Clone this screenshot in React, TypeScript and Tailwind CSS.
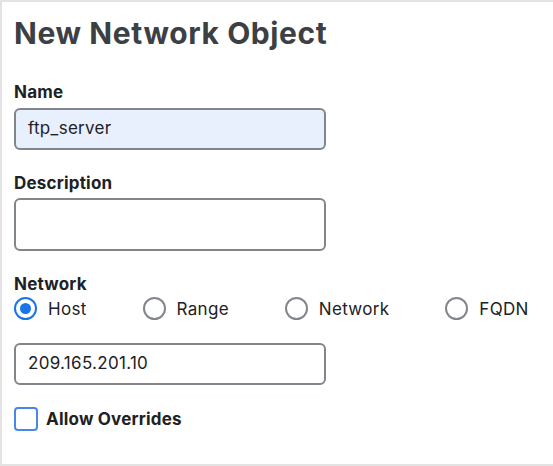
import React from "react";

function Radio({ label, checked }: { label: string; checked?: boolean }) {
  return (
    <div className="flex items-center gap-[11px]">
      <span
        className={
          "flex h-[23px] w-[23px] items-center justify-center rounded-full border-2 " +
          (checked ? "border-[#1a73e8]" : "border-[#80868b]")
        }
      >
        {checked && <span className="h-[11px] w-[11px] rounded-full bg-[#1a73e8]" />}
      </span>
      <span className="text-[17px] leading-[20px] tracking-[0.3px] text-[#202124]">{label}</span>
    </div>
  );
}

export default function App() {
  return (
    <div
      className="h-[466px] w-[553px] border-b-2 border-l-2 border-t-2 border-[#e3e3e3] bg-white pl-[12px]"
      style={{ fontFamily: "Inter, 'Noto Sans', sans-serif" }}
    >
      <h1 className="mt-[13px] text-[30px] font-bold leading-[36px] tracking-[0.6px] text-[#3c4043]">
        New Network Object
      </h1>

      <div className="mt-[31px] text-[17px] font-bold leading-[20px] tracking-[0.2px] text-[#202124]">Name</div>
      <div className="mt-[6px] flex h-[42px] w-[312px] items-center rounded-[6px] border-2 border-[#80868b] bg-[#e8f0fe] px-[12px] text-[17px] tracking-[0.3px] text-[#202124]">
        ftp_server
      </div>

      <div className="mt-[23px] text-[17px] font-bold leading-[20px] tracking-[0.2px] text-[#202124]">Description</div>
      <div className="mt-[5px] h-[53px] w-[312px] rounded-[6px] border-2 border-[#80868b] bg-white" />

      <div className="mt-[23px] text-[17px] font-bold leading-[20px] tracking-[0.2px] text-[#202124]">Network</div>
      <div className="mt-[3px] flex items-center gap-[56px]">
        <Radio label="Host" checked />
        <Radio label="Range" />
        <Radio label="Network" />
        <Radio label="FQDN" />
      </div>

      <div className="mt-[23px] flex h-[42px] w-[312px] items-center rounded-[6px] border-2 border-[#80868b] bg-white px-[12px] text-[17px] tracking-[0.3px] text-[#202124]">
        209.165.201.10
      </div>

      <div className="mt-[22px] flex items-center gap-[8px]">
        <span className="h-[24px] w-[24px] rounded-[4px] border-2 border-[#4a86e8] bg-white" />
        <span className="text-[17px] font-bold leading-[20px] tracking-[0.2px] text-[#202124]">Allow Overrides</span>
      </div>
    </div>
  );
}
